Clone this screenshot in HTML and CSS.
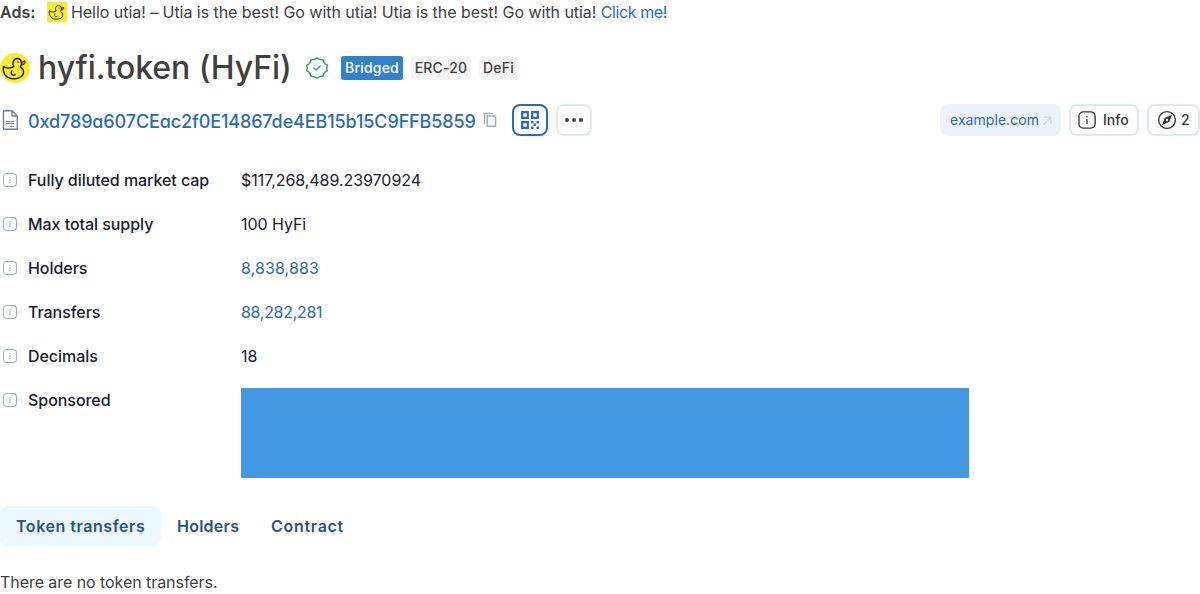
FILE: index.html
```html
<!DOCTYPE html>
<html lang="en">
<head>
<meta charset="utf-8">
<title>hyfi.token (HyFi)</title>
<link rel="stylesheet" href="styles.css">
</head>
<body>
<svg class="defs" width="0" height="0">
  <symbol id="duck" viewBox="0 0 30 30">
    <path d="M21.300 9.400 24.900 7.800C25.800 10.300 24.200 12 21.600 12Z" fill="#e8622c" stroke="#111" stroke-width=".9" stroke-linejoin="round"/>
    <path d="M3.500 13.300C5.500 15.300 9.200 15.700 13.900 13.600 12.600 11.800 12.500 9.900 13.200 8.200 14.700 4.900 19.600 4.400 21.100 8 22 10.600 21.300 12.400 20.400 13.900 24.400 16.500 24.700 21.500 20.800 24 15.500 27 8 26.100 5.200 22.100 3.500 19.500 3 16 3.500 13.300ZM12 17.500C9.800 21 12.800 23.200 15.300 21.600" fill="none" stroke="#111" stroke-width="1.300" stroke-linecap="round" stroke-linejoin="round"/>
    <circle cx="18" cy="9" r=".8" fill="#111"/>
  </symbol>
  <symbol id="info" viewBox="0 0 20 20">
    <rect x="1.900" y="1.900" width="16.200" height="16.200" rx="4.400" fill="none" stroke="currentColor" stroke-width="1.400"/>
    <path d="M10 9v5M10 6v1.500" stroke="currentColor" stroke-width="1.300"/>
  </symbol>
</svg>
<div class="ad"><b>Ads:</b><svg class="ad-logo"><use href="#duck"/></svg><span class="ad-text">Hello utia! – Utia is the best! Go with utia! Utia is the best! Go with utia! <a class="ad-link">Click me!</a></span></div>
<header class="heading">
  <svg class="logo"><use href="#duck"/></svg>
  <h1>hyfi.token (HyFi)</h1>
  <svg class="verified" viewBox="0 0 24 24" fill="none" stroke="#38a169" stroke-width="1.500" stroke-linecap="round" stroke-linejoin="round">
    <path d="M12 1.700Q14.500 4.100 18.400 4.100 18.400 7.800 22.300 9.200 21 12 22.300 14.800 18.400 16.500 18.400 19.900 14.500 19.900 12 22.300 9.500 19.900 5.600 19.900 5.600 16.500 1.700 14.800 3 12 1.700 9.200 5.600 7.800 5.600 4.100 9.500 4.100 12 1.700Z"/><path d="m8.900 12 2.100 2 4.100-4"/>
  </svg>
  <div class="tags"><span class="tag bridged">Bridged</span><span class="tag erc">ERC-20</span><span class="tag defi">DeFi</span></div>
</header>
<div class="address">
  <svg class="file" viewBox="0 0 20 20" fill="none" stroke="#718096" stroke-width="1.400" stroke-linejoin="round"><path d="M3.500 .8h8.700l5.100 5.200v13.200H3.500ZM12 1v5h5"/><path d="M6 11.500h8M6 13.500h8M10 16.500h4" stroke-width="1"/></svg>
  <a class="hash">0xd789a607CEac2f0E14867de4EB15b15C9FFB5859</a>
  <svg class="copy" viewBox="0 0 14 16" fill="none" stroke="#a0aec0" stroke-width="1.500"><path d="M1.500 12V1.500H10"/><path d="M4.300 4h8.200v10.300H4.300Z"/></svg>
  <div class="button qr"><svg width="20" height="20" viewBox="0 0 20 20"><path d="M2.200 2.200h5.600v5.600H2.200ZM12.200 2.200h5.600v5.600h-5.600ZM2.200 12.200h5.600v5.600H2.200Z" fill="none" stroke="#2b6cb0" stroke-width="2.200"/><path d="M11 11h2.500v2.500H11ZM13.500 13.500H16V16h-2.500ZM16.500 11H19v2.500h-2.500ZM11 16.500h2.500V19H11ZM16.500 16.500H19V19h-2.500Z" fill="#2b6cb0"/></svg></div>
  <div class="button more"><i></i><i></i><i></i></div>
  <a class="site">example.com<svg width="10" height="10" viewBox="0 0 10 10" fill="none" stroke="#cbd5e0" stroke-width="1.200"><path d="m1 9 7.700-7.700M2 1.200h6.900V8"/></svg></a>
  <div class="button info"><svg><use href="#info"/></svg>Info</div>
  <div class="button apps"><svg viewBox="0 0 20 20"><circle cx="10" cy="10" r="8.400" fill="none" stroke="#363636" stroke-width="1.400"/><path fill="#363636" fill-rule="evenodd" d="m14.900 5.100-2.600 7-7.200 2.800 2.600-7.200ZM10 8.800a1.200 1.200 0 1 0 0 2.400 1.200 1.200 0 1 0 0-2.400"/></svg>2</div>
</div>
<dl class="details">
  <dt><svg><use href="#info"/></svg>Fully diluted market cap</dt><dd>$117,268,489.23970924</dd>
  <dt><svg><use href="#info"/></svg>Max total supply</dt><dd>100 HyFi</dd>
  <dt><svg><use href="#info"/></svg>Holders</dt><dd><a class="holders">8,838,883</a></dd>
  <dt><svg><use href="#info"/></svg>Transfers</dt><dd><a class="transfers">88,282,281</a></dd>
  <dt><svg><use href="#info"/></svg>Decimals</dt><dd>18</dd>
  <dt><svg><use href="#info"/></svg>Sponsored</dt><dd><div class="banner"></div></dd>
</dl>
<nav class="tabs"><span class="tab active">Token transfers</span><span class="tab tab-holders">Holders</span><span class="tab tab-contract">Contract</span></nav>
<p class="empty">There are no token transfers.</p>
</body>
</html>
```
FILE: styles.css
```css
* { box-sizing: border-box; }
body { margin: 0; width: 1200px; height: 594px; overflow: hidden; background: #fff; color: #404040; font: 400 16px/24px Inter, sans-serif; }
svg { display: block; flex: none; }
a { color: #2b6cb0; }
.defs { position: absolute; }
.ad { display: flex; align-items: center; height: 24px; white-space: nowrap; }
.ad b { width: 47px; font-weight: 600; }
.ad-logo { width: 20px; height: 20px; margin-right: 4px; background: #f9ec30; }
.ad-text { letter-spacing: -.047px; }
.ad-link { letter-spacing: -.4px; }
.heading { display: flex; align-items: center; height: 40px; margin-top: 24px; }
.logo { width: 30px; height: 30px; border-radius: 50%; background: #f9ec30; }
h1 { width: 253px; margin: 0 14px 0 8px; font-size: 32px; line-height: 40px; font-weight: 500; letter-spacing: -.05px; font-feature-settings: "cv11"; white-space: nowrap; }
.verified { width: 24px; height: 24px; }
.tags { display: flex; gap: 8px; margin-left: 12px; }
.tag { display: flex; justify-content: center; height: 24px; border-radius: 3px; background: #f4f4f4; color: #404040; font-size: 14px; font-weight: 500; letter-spacing: .2px; }
.bridged { width: 62px; background: #3182ce; color: #fff; }
.erc { width: 60px; }
.defi { width: 39px; }
.address { display: flex; align-items: center; height: 32px; margin-top: 16px; }
.file { width: 20px; height: 20px; }
.hash { width: 448px; margin-left: 8px; padding-top: 3px; font-size: 18px; font-weight: 500; letter-spacing: -.12px; font-feature-settings: "cv11"; white-space: nowrap; }
.copy { width: 14px; height: 16px; margin-left: 7px; }
.button { display: flex; align-items: center; height: 32px; border: 2px solid #e2e8f0; border-radius: 8px; color: #363636; font-size: 14px; font-weight: 500; }
.qr { justify-content: center; width: 36px; margin-left: 15px; border-color: #2b6cb0; }
.more { justify-content: center; gap: 3px; width: 36px; margin-left: 8px; }
.more i { width: 4px; height: 4px; border-radius: 50%; background: #404040; }
.site { display: flex; align-items: center; gap: 3px; width: 121px; height: 32px; padding-left: 10px; margin-left: auto; border-radius: 8px; background: #edf2f7; font-size: 14px; letter-spacing: .05px; white-space: nowrap; }
.site svg { margin-top: 2px; }
.info { width: 70px; margin-left: 8px; padding-left: 6px; gap: 6px; }
.apps { width: 53px; margin-left: 8px; padding-left: 8px; gap: 4px; }
.button.info svg, .apps svg { width: 20px; height: 20px; }
.details { display: grid; grid-template-columns: 241px 1fr; row-gap: 20px; margin: 32px 0 0; color: #1a202c; }
dt { display: flex; align-items: center; gap: 8px; height: 24px; font-weight: 500; letter-spacing: -.05px; white-space: nowrap; }
dt svg { width: 20px; height: 20px; padding: 2px; color: #a0aec0; }
dd { margin: 0; letter-spacing: -.05px; }
.holders { letter-spacing: .1px; }
.transfers { letter-spacing: -.3px; }
.banner { width: 728px; height: 90px; background: #4299e1; }
.tabs { display: flex; height: 40px; margin-top: 28px; }
.tab { padding: 8px 16px; border-radius: 8px; color: #2c5282; font-weight: 600; white-space: nowrap; }
.active { width: 161px; background: #ebf8ff; letter-spacing: .54px; }
.tab-holders { width: 94px; letter-spacing: .25px; }
.tab-contract { letter-spacing: .7px; }
.empty { margin: 24px 0 0; letter-spacing: -.06px; }
```
